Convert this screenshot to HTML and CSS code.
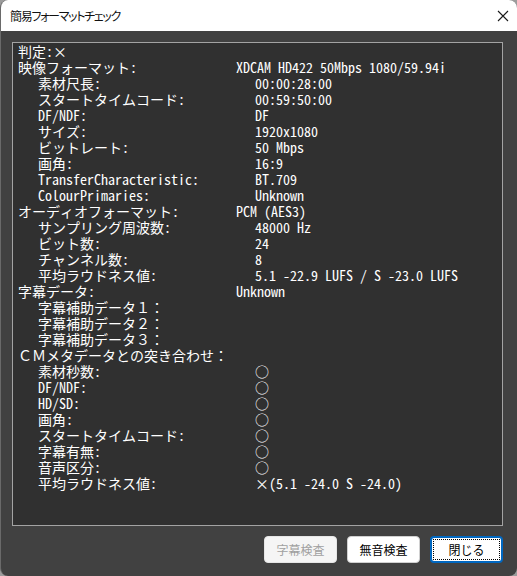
FILE: index.html
```html
<!DOCTYPE html>
<html lang="ja">
<head>
<meta charset="utf-8">
<title>簡易フォーマットチェック</title>
<link rel="stylesheet" href="styles.css">
</head>
<body>
<div class="window">
  <div class="titlebar">
    <span class="title">簡易フォーマットチェック</span>
    <svg class="close" width="12" height="12" viewBox="0 0 12 12"><path d="M1 1L11 11M11 1L1 11" stroke="#1a1a1a" stroke-width="1.1" fill="none"/></svg>
  </div>
  <div class="client">
    <div class="panel">
      <div class="row"><span class="k">判定:×</span></div>
      <div class="row"><span class="k">映像フォーマット:</span><span class="v">XDCAM HD422 50Mbps 1080/59.94i</span></div>
      <div class="row sub"><span class="k">素材尺長:</span><span class="v">00:00:28:00</span></div>
      <div class="row sub"><span class="k">スタートタイムコード:</span><span class="v">00:59:50:00</span></div>
      <div class="row sub"><span class="k">DF/NDF:</span><span class="v">DF</span></div>
      <div class="row sub"><span class="k">サイズ:</span><span class="v">1920x1080</span></div>
      <div class="row sub"><span class="k">ビットレート:</span><span class="v">50 Mbps</span></div>
      <div class="row sub"><span class="k">画角:</span><span class="v">16:9</span></div>
      <div class="row sub"><span class="k">TransferCharacteristic:</span><span class="v">BT.709</span></div>
      <div class="row sub"><span class="k">ColourPrimaries:</span><span class="v">Unknown</span></div>
      <div class="row"><span class="k">オーディオフォーマット:</span><span class="v">PCM (AES3)</span></div>
      <div class="row sub"><span class="k">サンプリング周波数:</span><span class="v">48000 Hz</span></div>
      <div class="row sub"><span class="k">ビット数:</span><span class="v">24</span></div>
      <div class="row sub"><span class="k">チャンネル数:</span><span class="v">8</span></div>
      <div class="row sub"><span class="k">平均ラウドネス値:</span><span class="v">5.1 -22.9 LUFS / S -23.0 LUFS</span></div>
      <div class="row"><span class="k">字幕データ:</span><span class="v">Unknown</span></div>
      <div class="row sub"><span class="k">字幕補助データ１：</span></div>
      <div class="row sub"><span class="k">字幕補助データ２：</span></div>
      <div class="row sub"><span class="k">字幕補助データ３：</span></div>
      <div class="row"><span class="k wide">ＣＭメタデータとの突き合わせ：</span></div>
      <div class="row sub"><span class="k">素材秒数:</span><span class="v">○</span></div>
      <div class="row sub"><span class="k">DF/NDF:</span><span class="v">○</span></div>
      <div class="row sub"><span class="k">HD/SD:</span><span class="v">○</span></div>
      <div class="row sub"><span class="k">画角:</span><span class="v">○</span></div>
      <div class="row sub"><span class="k">スタートタイムコード:</span><span class="v">○</span></div>
      <div class="row sub"><span class="k">字幕有無:</span><span class="v">○</span></div>
      <div class="row sub"><span class="k">音声区分:</span><span class="v">○</span></div>
      <div class="row sub"><span class="k">平均ラウドネス値:</span><span class="v">×(5.1 -24.0 S -24.0)</span></div>
    </div>
    <div class="buttons">
      <button class="btn" disabled>字幕検査</button>
      <button class="btn">無音検査</button>
      <button class="btn default"><span class="focus">閉じる</span></button>
    </div>
  </div>
</div>
</body>
</html>
```
FILE: styles.css
```css
html, body {
  margin: 0;
  padding: 0;
}
body {
  width: 517px;
  height: 576px;
  background: #9c9c9c;
  overflow: hidden;
}
.window {
  width: 517px;
  height: 576px;
  box-sizing: border-box;
  border-radius: 8px;
  overflow: hidden;
  background: #414141;
  display: flex;
  flex-direction: column;
  border-left: 1px solid #6a6a6a;
}
.titlebar {
  height: 31px;
  flex: none;
  background: #ffffff;
  display: flex;
  align-items: center;
  justify-content: space-between;
  padding: 0 9px 0 9px;
}
.title {
  font-family: "Noto Sans CJK JP", sans-serif;
  font-size: 12px;
  color: #111;
  font-feature-settings: "palt";
  letter-spacing: -1.3px;
}
.close {
  display: block;
  margin-right: -1px;
}
.client {
  flex: 1;
  display: flex;
  flex-direction: column;
  padding: 11px 14px 0 11px;
}
.panel {
  height: 484px;
  box-sizing: border-box;
  border: 1px solid #a3a3a3;
  background: #303030;
  padding: 0 0 0 5px;
  font-family: "Noto Sans Mono CJK JP", "Noto Sans CJK JP", monospace;
  font-size: 14px;
  color: #ffffff;
}
.row {
  display: flex;
  height: 16px;
  line-height: 16px;
  white-space: pre;
}
.row.sub {
  padding-left: 20px;
}
.k {
  width: 218px;
  flex: none;
}
.row.sub .k {
  width: 217px;
}
.k.wide {
  width: auto;
}
.buttons {
  display: flex;
  justify-content: flex-end;
  gap: 10px;
  margin-top: 10px;
}
.btn {
  width: 73px;
  height: 27px;
  box-sizing: border-box;
  border: 1px solid #d0d0d0;
  border-radius: 4px;
  background: #ffffff;
  font-family: "Noto Sans CJK JP", sans-serif;
  font-size: 12px;
  color: #000;
  padding: 0;
  display: flex;
  align-items: center;
  justify-content: center;
}
.btn:disabled {
  background: #f5f5f5;
  border-color: #e6e6e6;
  color: #a0a0a0;
}
.btn.default {
  border: 2px solid #0067c0;
  padding: 1px;
}
.focus {
  flex: 1;
  align-self: stretch;
  display: flex;
  align-items: center;
  justify-content: center;
  border: 1px dotted #000;
}
```
